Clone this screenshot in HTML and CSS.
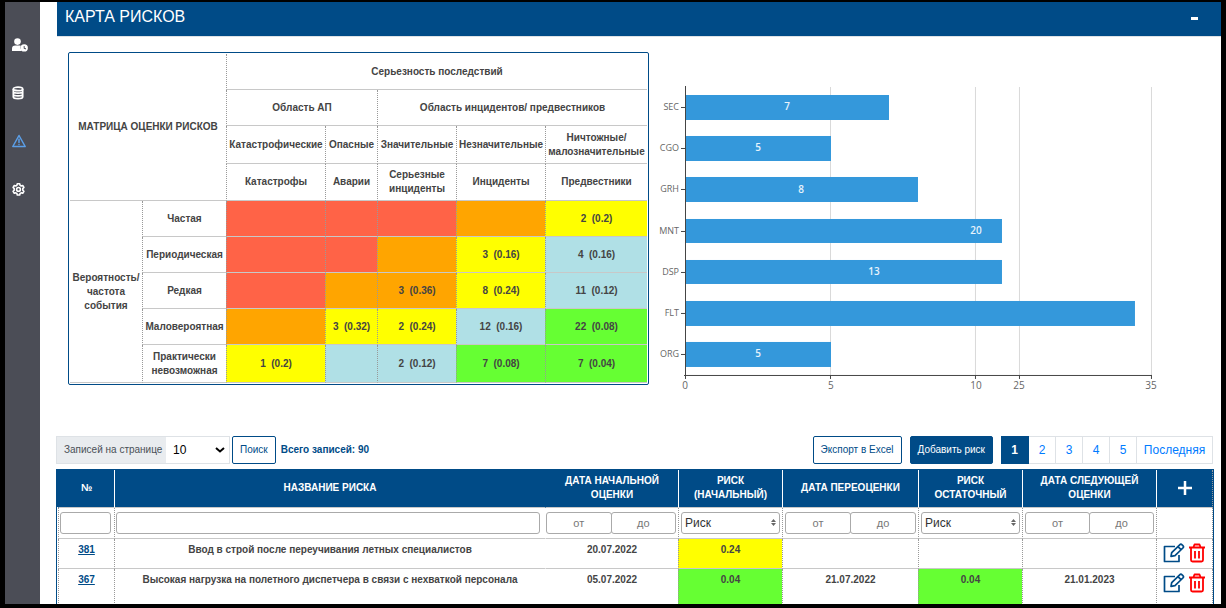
FILE: index.html
```html
<!DOCTYPE html>
<html lang="ru">
<head>
<meta charset="utf-8">
<title>Карта рисков</title>
<link rel="stylesheet" href="styles.css">
</head>
<body>
<div class="app">
  <nav class="sidebar" aria-label="Разделы">
    <a class="nav-link" href="#users" aria-label="Пользователи">
      <svg width="16" height="14" viewBox="0 0 16 14" fill="currentColor"><circle cx="5.500" cy="3.600" r="3.300"/><path d="M0 13v-2.200a3.300 3.300 0 0 1 3.300-3.300h4.200c.5 0 .9.1 1.200.3a4.600 4.600 0 0 0 .6 4.200q.3.600.6 1z"/><path fill-rule="evenodd" d="M12.200 6.200a3.700 3.700 0 1 1 0 7.400 3.700 3.700 0 0 1 0-7.400zm-.5 1.700v2.500l1.900 1 .5-.8-1.500-.8v-1.900z"/></svg>
    </a>
    <a class="nav-link" href="#data" aria-label="Данные">
      <svg width="12" height="14" viewBox="0 0 12 14" fill="none" stroke="currentColor" stroke-width="1.700"><ellipse cx="6" cy="2.900" rx="4.700" ry="1.700"/><path d="M1.300 3v8c0 2.200 9.400 2.200 9.400 0V3M1.300 5.500c0 2.200 9.400 2.200 9.400 0M1.300 8.300c0 2.200 9.400 2.200 9.400 0"/></svg>
    </a>
    <a class="nav-link nav-link-active" href="#risks" aria-label="Риски">
      <svg width="14" height="14" viewBox="0 0 14 14" fill="none" stroke="currentColor" stroke-width="1.500" stroke-linejoin="round" stroke-linecap="round"><path d="M7 1.500 13.200 12.500H.8zM7 5.200v3.300M7 10.400v.2"/></svg>
    </a>
    <a class="nav-link" href="#settings" aria-label="Настройки">
      <svg width="13" height="13" viewBox="0 0 13 13" fill="none" stroke="currentColor" stroke-width="1.600" stroke-linejoin="round"><path d="M5.300.8h2.400l.4 1.500 1.100.7 1.500-.5 1.200 2-1.100 1.100v1.600l1.100 1.100-1.200 2-1.500-.5-1.100.7-.4 1.500H5.300l-.4-1.500-1.100-.7-1.500.5-1.200-2 1.100-1.100V5.600L1.100 4.500l1.200-2 1.500.5 1.100-.7z"/><circle cx="6.500" cy="6.400" r="1.900"/></svg>
    </a>
  </nav>

  <main class="main">
    <header class="title-bar">
      <h1 class="title">КАРТА РИСКОВ</h1>
      <button class="collapse" type="button" aria-label="Свернуть"><span class="collapse-mark"></span></button>
    </header>

    <section class="overview">
      <div class="matrix-box">
        <table class="matrix">
          <colgroup><col class="m1"><col class="m2"><col class="m3"><col class="m4"><col class="m5"><col class="m6"><col class="m7"></colgroup>
          <tbody>
            <tr class="r36"><th colspan="2" rowspan="4">МАТРИЦА ОЦЕНКИ РИСКОВ</th><th colspan="5">Серьезность последствий</th></tr>
            <tr class="r36"><th colspan="2">Область АП</th><th colspan="3">Область инцидентов/ предвестников</th></tr>
            <tr class="r38"><th>Катастрофические</th><th>Опасные</th><th>Значительные</th><th>Незначительные</th><th>Ничтожные/<br>малозначительные</th></tr>
            <tr class="r37"><th>Катастрофы</th><th>Аварии</th><th>Серьезные инциденты</th><th>Инциденты</th><th>Предвестники</th></tr>
            <tr class="r36"><th rowspan="5">Вероятность/<br>частота события</th><th>Частая</th><td class="red"></td><td class="red"></td><td class="red"></td><td class="orange"></td><td class="yellow">2&nbsp; (0.2)</td></tr>
            <tr class="r36"><th>Периодическая</th><td class="red"></td><td class="red"></td><td class="orange"></td><td class="yellow">3&nbsp; (0.16)</td><td class="blue">4&nbsp; (0.16)</td></tr>
            <tr class="r36"><th>Редкая</th><td class="red"></td><td class="orange"></td><td class="orange">3&nbsp; (0.36)</td><td class="yellow">8&nbsp; (0.24)</td><td class="blue">11&nbsp; (0.12)</td></tr>
            <tr class="r36"><th>Маловероятная</th><td class="orange"></td><td class="yellow">3&nbsp; (0.32)</td><td class="yellow">2&nbsp; (0.24)</td><td class="blue">12&nbsp; (0.16)</td><td class="green">22&nbsp; (0.08)</td></tr>
            <tr class="r38"><th>Практически<br>невозможная</th><td class="yellow">1&nbsp; (0.2)</td><td class="blue"></td><td class="blue">2&nbsp; (0.12)</td><td class="green">7&nbsp; (0.08)</td><td class="green">7&nbsp; (0.04)</td></tr>
          </tbody>
        </table>
      </div>
      <svg class="chart" viewBox="0 0 564 345" role="img" aria-label="Количество рисков по направлениям">
        <g class="grid"><path d="M181.500 35v288M326.500 35v288M370.500 35v288M502.500 35v288"/></g>
        <g class="bars">
          <rect x="36" y="43" width="204" height="25"/>
          <rect x="36" y="84" width="146" height="25"/>
          <rect x="36" y="125" width="233" height="25"/>
          <rect x="36" y="167" width="317" height="24"/>
          <rect x="36" y="208" width="317" height="24"/>
          <rect x="36" y="249" width="450" height="25"/>
          <rect x="36" y="290" width="146" height="25"/>
        </g>
        <path class="axis" d="M36.500 34v293M35 323.500h468M181.500 323v4M326.500 323v4M370.500 323v4M502.500 323v4M32 55.500h4M32 96.500h4M32 137.500h4M32 179.500h4M32 220.500h4M32 261.500h4M32 302.500h4"/>
        <g class="cat">
          <text x="30" y="58">SEC</text><text x="30" y="99">CGO</text><text x="30" y="140">GRH</text><text x="30" y="182">MNT</text><text x="30" y="223">DSP</text><text x="30" y="264">FLT</text><text x="30" y="305">ORG</text>
        </g>
        <g class="tick">
          <text x="36" y="337">0</text><text x="182" y="337">5</text><text x="327" y="337">10</text><text x="370" y="337">25</text><text x="502" y="337">35</text>
        </g>
        <g class="value">
          <text x="138" y="58">7</text><text x="109" y="99">5</text><text x="152" y="141">8</text><text x="327" y="182">20</text><text x="225" y="223">13</text><text x="109" y="305">5</text>
        </g>
      </svg>
    </section>

    <section class="records">
      <div class="toolbar">
        <div class="page-size">
          <label class="page-size-label" for="size">Записей на странице</label>
          <span class="select-wrap">
            <select class="page-size-select" id="size"><option>10</option><option>25</option></select>
            <svg class="chevron" width="10" height="6" viewBox="0 0 10 6" fill="none" stroke="currentColor" stroke-width="2"><path d="m1 1 4 3.500L9 1"/></svg>
          </span>
        </div>
        <button class="btn" type="button">Поиск</button>
        <span class="total">Всего записей: 90</span>
        <button class="btn btn-export" type="button">Экспорт в Excel</button>
        <button class="btn btn-primary" type="button">Добавить риск</button>
        <nav class="pages" aria-label="Страницы">
          <a class="page page-current" href="#p1">1</a><a class="page" href="#p2">2</a><a class="page" href="#p3">3</a><a class="page" href="#p4">4</a><a class="page" href="#p5">5</a><a class="page page-last" href="#last">Последняя</a>
        </nav>
      </div>

      <div class="list-box">
        <table class="list">
          <colgroup><col class="c-num"><col><col class="c-date"><col class="c-risk"><col class="c-date2"><col class="c-risk"><col class="c-date3"><col class="c-act"></colgroup>
          <thead>
            <tr class="head">
              <th>№</th><th>НАЗВАНИЕ РИСКА</th><th class="no-line">ДАТА НАЧАЛЬНОЙ<br>ОЦЕНКИ</th><th>РИСК<br>(НАЧАЛЬНЫЙ)</th><th>ДАТА ПЕРЕОЦЕНКИ</th><th>РИСК<br>ОСТАТОЧНЫЙ</th><th>ДАТА СЛЕДУЮЩЕЙ<br>ОЦЕНКИ</th>
              <th><button class="add" type="button" aria-label="Добавить"><svg width="16" height="16" viewBox="0 0 16 16" stroke="currentColor" stroke-width="2.500"><path d="M8 1v14M1 8h14"/></svg></button></th>
            </tr>
            <tr class="filters">
              <td><div class="filter"><input class="field" type="text" aria-label="Номер"></div></td>
              <td><div class="filter filter-name"><input class="field" type="text" aria-label="Название риска"></div></td>
              <td class="no-line"><div class="filter filter-range filter-first"><input class="field" type="text" placeholder="от" aria-label="Начальная оценка от"><input class="field" type="text" placeholder="до" aria-label="Начальная оценка до"></div></td>
              <td><div class="filter filter-select"><select class="field" aria-label="Начальный риск"><option>Риск</option></select><svg class="sort" width="5" height="7" viewBox="0 0 5 7" fill="currentColor"><path d="M2.500 0 5 3H0zM0 4h5L2.500 7z"/></svg></div></td>
              <td><div class="filter filter-range"><input class="field" type="text" placeholder="от" aria-label="Переоценка от"><input class="field" type="text" placeholder="до" aria-label="Переоценка до"></div></td>
              <td><div class="filter filter-select"><select class="field" aria-label="Остаточный риск"><option>Риск</option></select><svg class="sort" width="5" height="7" viewBox="0 0 5 7" fill="currentColor"><path d="M2.500 0 5 3H0zM0 4h5L2.500 7z"/></svg></div></td>
              <td><div class="filter filter-range"><input class="field" type="text" placeholder="от" aria-label="Следующая оценка от"><input class="field" type="text" placeholder="до" aria-label="Следующая оценка до"></div></td>
              <td></td>
            </tr>
          </thead>
          <tbody>
            <tr class="row">
              <td><a class="id" href="#381">381</a></td><td>Ввод в строй после переучивания летных специалистов</td><td class="no-line">20.07.2022</td><td class="yellow">0.24</td><td></td><td></td><td></td>
              <td><div class="actions">
                <button class="act" type="button" aria-label="Изменить"><svg width="22" height="20" viewBox="0 0 22 20" fill="none" stroke="currentColor" stroke-width="1.700" stroke-linejoin="round"><path d="M12 3.500H1.500v15H16V12M8 13.300l.7-3.700 8-7.800a1.700 1.700 0 0 1 2.400 0l.8.800a1.700 1.700 0 0 1 0 2.400l-7.900 7.700zM15 3.600l3.200 3.200"/></svg></button>
                <button class="act act-delete" type="button" aria-label="Удалить"><svg width="16" height="20" viewBox="0 0 16 20" fill="none" stroke="currentColor" stroke-width="1.800" stroke-linejoin="round"><path d="M0 4.500h16M2 4.500v12.500q0 1.500 1.500 1.500h9q1.500 0 1.500-1.500V4.500M4.500 4l1-2.500h5l1 2.500M6 8v7.500M10 8v7.500"/></svg></button>
              </div></td>
            </tr>
            <tr class="row row-tall">
              <td><a class="id" href="#367">367</a></td><td>Высокая нагрузка на полетного диспетчера в связи с нехваткой персонала</td><td class="no-line">05.07.2022</td><td class="green">0.04</td><td>21.07.2022</td><td class="green">0.04</td><td>21.01.2023</td>
              <td><div class="actions">
                <button class="act" type="button" aria-label="Изменить"><svg width="22" height="20" viewBox="0 0 22 20" fill="none" stroke="currentColor" stroke-width="1.700" stroke-linejoin="round"><path d="M12 3.500H1.500v15H16V12M8 13.300l.7-3.700 8-7.800a1.700 1.700 0 0 1 2.400 0l.8.800a1.700 1.700 0 0 1 0 2.400l-7.900 7.700zM15 3.600l3.200 3.200"/></svg></button>
                <button class="act act-delete" type="button" aria-label="Удалить"><svg width="16" height="20" viewBox="0 0 16 20" fill="none" stroke="currentColor" stroke-width="1.800" stroke-linejoin="round"><path d="M0 4.500h16M2 4.500v12.500q0 1.500 1.500 1.500h9q1.500 0 1.500-1.500V4.500M4.500 4l1-2.500h5l1 2.500M6 8v7.500M10 8v7.500"/></svg></button>
              </div></td>
            </tr>
          </tbody>
        </table>
      </div>
    </section>
  </main>
</div>
</body>
</html>
```

FILE: styles.css
```css
* { box-sizing: border-box; }

body {
  margin: 0;
  height: 100vh;
  padding: 2px 5px 4px;
  background: #000;
  color: #444;
  font: 10px/14px "Liberation Sans", Arial, sans-serif;
}

button, input, select { font: inherit; margin: 0; }
button { cursor: pointer; }

.app { display: flex; height: 100%; overflow: hidden; background: #fff; }

/* Sidebar */
.sidebar {
  flex: none;
  width: 35px;
  padding: 19px 0 0 7px;
  background: #4b4d56;
}
.nav-link { display: flex; align-items: center; height: 48px; color: #fff; }
.nav-link-active { color: #5b9fe8; }

.main { flex: 1; min-width: 0; padding-left: 16px; }

.title-bar {
  display: flex;
  align-items: center;
  justify-content: space-between;
  height: 35px;
  margin-left: 1px;
  padding: 0 23px 4px 8px;
  background: #004b87;
  border-bottom: 1px solid #dee2e6;
}
.title { margin: 0; color: #fff; font-size: 16px; line-height: 20px; font-weight: 400; }
.collapse { padding: 2px 0 0; border: 0; background: none; }
.collapse-mark { display: block; width: 7px; height: 3px; background: #fff; }

/* Matrix and chart */
.overview { display: flex; align-items: flex-start; padding: 15px 8px 0 12px; }
.matrix-box {
  flex: 0 1 581px;
  padding: 1px;
  border: 1px solid #004b87;
  border-radius: 2px;
}
.matrix { width: 100%; table-layout: fixed; border-collapse: separate; border-spacing: 0; }
.matrix th, .matrix td {
  padding: 0;
  border-bottom: 1px solid #c8c8c8;
  border-left: 1px dotted #999;
  text-align: center;
  font-weight: 700;
}
.matrix tr:first-child th:first-child, .matrix th[rowspan="5"] { border-left: 0; }
.m1 { width: 72px; }
.m2 { width: 84px; }
.m3 { width: 99px; }
.m4 { width: 52px; }
.m5 { width: 79px; }
.m6 { width: 89px; }
.m7 { width: 102px; }
.r36 { height: 36px; }
.r37 { height: 37px; }
.r38 { height: 38px; }
.red { background: #ff6347; }
.orange { background: #ffa500; }
.yellow { background: #ff0; }
.blue { background: #b0e0e6; }
.green { background: #6f3; }

.chart { flex: 1; min-width: 0; font-family: "Open Sans", "Noto Sans", sans-serif; font-size: 10px; }
.grid { stroke: #d9d9d9; fill: none; }
.bars { fill: #3498db; }
.axis { stroke: #444; fill: none; }
.cat { fill: #666; font-size: 9px; text-anchor: end; }
.tick { fill: #666; text-anchor: middle; }
.value { fill: #e8f3fb; font-weight: 600; text-anchor: middle; }

/* Records */
.records { padding: 39px 7px 0 0; }
.toolbar { display: flex; align-items: center; height: 28px; margin-right: 1px; }
.page-size { display: flex; height: 28px; margin-right: 2px; border: 1px solid #dee2e6; }
.page-size-label {
  width: 109px;
  padding-left: 7px;
  background: #e9ecef;
  color: #495057;
  line-height: 26px;
  white-space: nowrap;
}
.select-wrap { position: relative; display: flex; width: 63px; }
.page-size-select {
  width: 100%;
  padding: 0 0 0 7px;
  border: 0;
  background: #fff;
  color: #000;
  font-size: 12px;
  appearance: none;
}
.chevron { position: absolute; right: 4px; top: 10px; color: #000; pointer-events: none; }
.btn {
  height: 28px;
  padding: 0 7px;
  border: 1px solid #004b87;
  border-radius: 2px;
  background: #fff;
  color: #004b87;
  white-space: nowrap;
}
.btn-export { margin: 0 8px 0 auto; }
.btn-primary { margin-right: 8px; background: #004b87; color: #fff; }
.total { margin-left: 5px; color: #004b87; font-weight: 700; }
.pages { display: flex; }
.page {
  width: 27px;
  height: 28px;
  border: 1px solid #dee2e6;
  border-left: 0;
  color: #007bff;
  font-size: 12px;
  line-height: 26px;
  text-align: center;
  text-decoration: none;
}
.page-current { width: 28px; border-color: #004b87; background: #004b87; color: #fff; font-weight: 700; }
.page-last { width: 76px; }

.list-box {
  margin-top: 5px;
  padding-left: 1px;
  border: 1px solid #004b87;
  background: linear-gradient(#004b87 37px, transparent 37px);
}
.list { width: 100%; table-layout: fixed; border-collapse: separate; border-spacing: 0; }
.list th, .list td { padding: 0; text-align: center; font-weight: 700; border-left: 1px dotted #999; border-bottom: 1px solid #c8c8c8; }
.list .no-line { border-left-color: transparent; }
.list th:last-child, .list td:last-child { border-right: 1px dotted #999; }
.c-num { width: 56px; }
.c-date { width: 133px; }
.c-risk { width: 104px; }
.c-date2 { width: 136px; }
.c-date3 { width: 134px; }
.c-act { width: 57px; }
.head { height: 38px; background: #004b87; color: #fff; }
.list .head th { border-left: 1px solid #fff; }
.list .head th:first-child, .list .head .no-line { border-left-color: #004b87; }
.add { display: block; margin: 0 auto; padding: 0; border: 0; background: none; color: #fff; height: 16px; }

.filters { height: 31px; }
.filter { position: relative; display: flex; height: 22px; margin: 0 3px 0 1px; }
.field {
  flex: 1;
  width: 0;
  min-width: 0;
  padding: 0 3px;
  border: 1px solid #aaa;
  border-radius: 3px;
  background: #fff;
  color: #333;
  font-size: 12px;
  font-weight: 400;
  appearance: none;
}
.filter-name { margin-right: 5px; }
.filter-select { margin: 0 2px; }
.filter-range { margin: 0 2px; }
.filter-first { margin-left: 0; }
.filter-range .field { text-align: center; font-size: 11px; }
.filter-range .field + .field { margin-left: -1px; }
.field::placeholder { color: #777; opacity: 1; }
.sort { position: absolute; right: 4px; top: 7px; color: #666; pointer-events: none; }

.row { height: 30px; }
.row-tall { height: 46px; }
.list .row td { padding-top: 4px; vertical-align: top; }
.id { color: #004b87; text-decoration: underline; }
.actions { display: flex; gap: 4px; padding-left: 6px; }
.act { height: 20px; padding: 0; border: 0; background: none; color: #004b87; }
.act-delete { color: #f00; }
```
